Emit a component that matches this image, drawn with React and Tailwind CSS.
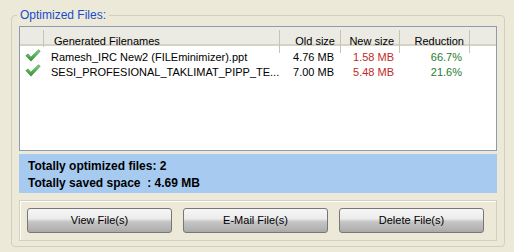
import React from "react";

const FILES = [
  { name: "Ramesh_IRC New2 (FILEminimizer).ppt", oldSize: "4.76 MB", newSize: "1.58 MB", reduction: "66.7%" },
  { name: "SESI_PROFESIONAL_TAKLIMAT_PIPP_TE...", oldSize: "7.00 MB", newSize: "5.48 MB", reduction: "21.6%" },
];

const COLS = "grid grid-cols-[24px_236px_61px_59px_70px_1fr]";

const CheckIcon = () => (
  <svg width="16" height="13" viewBox="0 0 16 13">
    <defs>
      <linearGradient id="chk" x1="0" y1="0" x2="0" y2="1">
        <stop offset="0" stopColor="#7fd77f" />
        <stop offset="1" stopColor="#2f952f" />
      </linearGradient>
    </defs>
    <path
      d="M0.8 6.6 L3.2 5 L5.8 8.2 L13.6 0.8 L15.2 2.2 L6 12.2 Z"
      fill="url(#chk)"
      stroke="#3a8a3a"
      strokeWidth="0.6"
      strokeLinejoin="round"
    />
  </svg>
);

const HeaderCell = ({ children, align = "right" }) => (
  <div className={`flex items-center h-full border-r border-[#c7c5b2] my-[3px] ${align === "right" ? "justify-end pr-[5px]" : "pl-[10px]"}`}>
    {children}
  </div>
);

const XpButton = ({ children }) => (
  <button
    type="button"
    className="w-[145px] h-[25px] rounded-[3px] border border-[#777777] text-black text-[11px] bg-[linear-gradient(to_bottom,#f6f6f6_0%,#ececec_42%,#c6c6c6_55%,#b4b4b4_85%,#a9a9a9_100%)]"
  >
    {children}
  </button>
);

export default function App() {
  return (
    <div className="w-[514px] h-[252px] bg-[#ECE9D8] overflow-hidden pt-[8px] pl-[11px] font-['Liberation_Sans',Arial,sans-serif] text-[11px] text-black">
      <fieldset className="w-[494px] h-[239px] border border-[#d0d0bf] rounded-[4px] px-[7px] pb-[5px]">
        <legend className="-ml-[2px] px-[3px] text-[#1a4ccc] text-[12px] leading-[14px]">Optimized Files:</legend>

        {/* list view */}
        <div className="mt-[4px] h-[125px] border border-[#8e9aad] bg-white">
          <div className={`${COLS} h-[19px] bg-[#ebeae3] border-b-2 border-[#d6d3c5] items-stretch`}>
            <div className="border-r border-[#c7c5b2] my-[3px]" />
            <HeaderCell align="left">Generated Filenames</HeaderCell>
            <HeaderCell>Old size</HeaderCell>
            <HeaderCell>New size</HeaderCell>
            <HeaderCell>Reduction</HeaderCell>
            <div />
          </div>
          <div className="pt-[4px]">
            {FILES.map((f) => (
              <div key={f.name} className={`${COLS} h-[15px] items-center leading-[15px]`}>
                <div className="flex justify-center -mt-[4px] pl-[1px]">
                  <CheckIcon />
                </div>
                <div className="pl-[7px] whitespace-nowrap overflow-hidden">{f.name}</div>
                <div className="text-right pr-[7px]">{f.oldSize}</div>
                <div className="text-right pr-[6px] text-[#c02a2a]">{f.newSize}</div>
                <div className="text-right pr-[8px] text-[#2a7a2a]">{f.reduction}</div>
                <div />
              </div>
            ))}
          </div>
        </div>

        {/* summary */}
        <div className="mt-[3px] h-[39px] bg-[#a6caf0] pl-[9px] pt-[4px] font-bold text-[12px] leading-[17px]">
          <div>Totally optimized files: 2</div>
          <div>Totally saved space&nbsp; : 4.69 MB</div>
        </div>

        {/* buttons */}
        <div className="mt-[7px] h-[41px] border border-[#d3d0c0] shadow-[inset_1px_1px_0_#ffffff] flex gap-[11px] pl-[7px] pt-[7px]">
          <XpButton>View File(s)</XpButton>
          <XpButton>E-Mail File(s)</XpButton>
          <XpButton>Delete File(s)</XpButton>
        </div>
      </fieldset>
    </div>
  );
}
